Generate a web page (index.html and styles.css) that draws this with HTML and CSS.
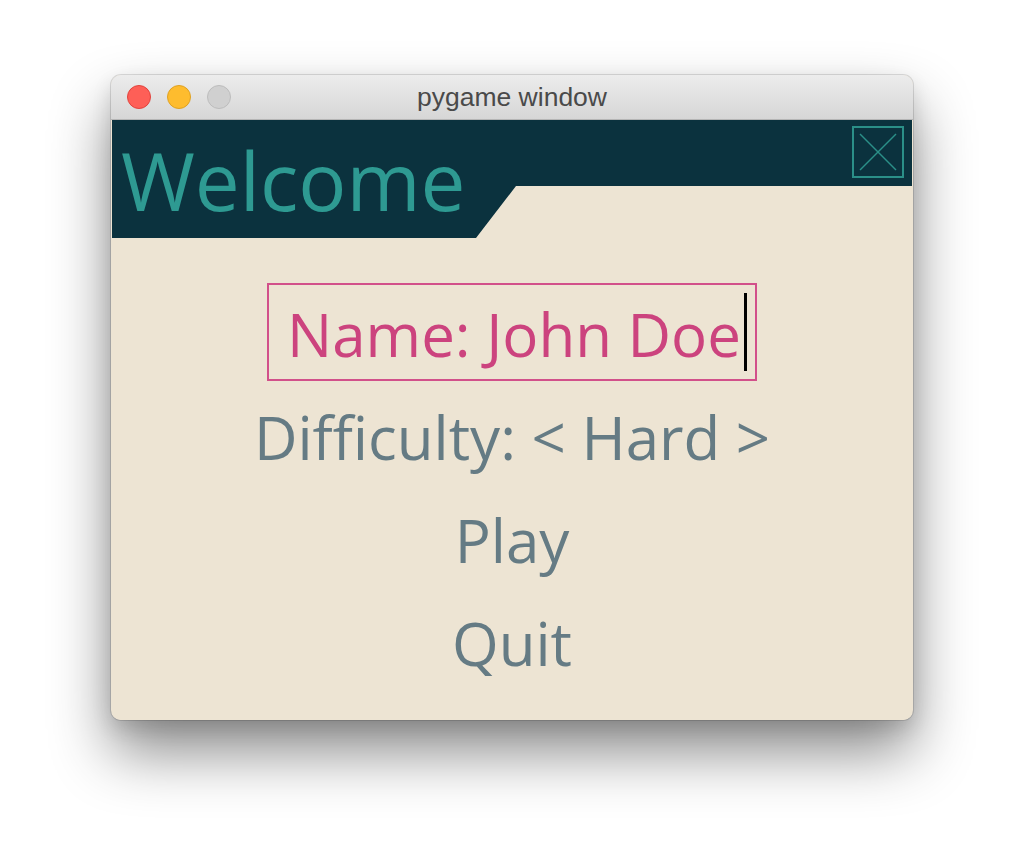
FILE: index.html
```html
<!DOCTYPE html>
<html>
<head>
<meta charset="utf-8">
<link rel="stylesheet" href="styles.css">
</head>
<body>
<div class="window">
  <div class="titlebar">
    <div class="lights">
      <span class="light red"></span>
      <span class="light yellow"></span>
      <span class="light gray"></span>
    </div>
    <div class="wtitle">pygame window</div>
  </div>
  <div class="content">
    <div class="header">
      <div class="htitle">Welcome</div>
      <div class="closebtn">
        <svg width="52" height="52" viewBox="0 0 52 52">
          <rect x="1" y="1" width="50" height="50" fill="none" stroke="#2b8f88" stroke-width="2"/>
          <line x1="8" y1="8" x2="44" y2="44" stroke="#2b8f88" stroke-width="1.4"/>
          <line x1="44" y1="8" x2="8" y2="44" stroke="#2b8f88" stroke-width="1.4"/>
        </svg>
      </div>
    </div>
    <div class="menu">
      <div class="item selected"><span class="txt">Name: John Doe</span><span class="cursor"></span></div>
      <div class="item">Difficulty: &lt; Hard &gt;</div>
      <div class="item">Play</div>
      <div class="item">Quit</div>
    </div>
  </div>
</div>
</body>
</html>
```

FILE: styles.css
```css
html, body {
  margin: 0;
  padding: 0;
  background: #ffffff;
}
body {
  width: 1024px;
  height: 868px;
  overflow: hidden;
  padding-top: 75px;
  padding-left: 111px;
  box-sizing: border-box;
}
.window {
  width: 802px;
  border-radius: 10px;
  overflow: hidden;
  box-shadow: 0 0 0 1px rgba(0,0,0,0.12), 0 32px 60px rgba(0,0,0,0.46), 0 8px 20px rgba(0,0,0,0.12);
  background: #ede4d3;
}
.titlebar {
  height: 44px;
  background: linear-gradient(#ececec, #d6d6d6);
  border-bottom: 1px solid #b5b5b5;
  position: relative;
  display: flex;
  align-items: center;
  justify-content: center;
}
.lights {
  position: absolute;
  left: 16px;
  top: 10px;
  display: flex;
  gap: 16px;
}
.light {
  width: 24px;
  height: 24px;
  border-radius: 50%;
  box-sizing: border-box;
}
.red { background: #fe5f57; border: 1px solid #e0443e; }
.yellow { background: #febc2e; border: 1px solid #dea123; }
.gray { background: #d0d0d0; border: 1px solid #bcbcbc; }
.wtitle {
  font-family: "Liberation Sans", Arial, sans-serif;
  font-size: 26.5px;
  color: #4a4a4a;
  margin-left: 0;
}
.content {
  width: 800px;
  height: 600px;
  margin: 0 1px;
  background: #ede4d3;
}
.header {
  height: 118px;
  background: #0b323e;
  clip-path: polygon(0 0, 100% 0, 100% 66px, 404px 66px, 364px 118px, 0 118px);
  display: flex;
  justify-content: space-between;
  align-items: flex-start;
}
.htitle {
  font-family: "Open Sans", sans-serif;
  font-size: 80px;
  line-height: 114px;
  color: #2e9a92;
  padding-left: 9px;
  margin-top: 3px;
}
.closebtn {
  margin-top: 6px;
  margin-right: 8px;
  width: 52px;
  height: 52px;
}
.closebtn svg { display: block; }
.menu {
  display: flex;
  flex-direction: column;
  align-items: center;
  gap: 5px;
  padding-top: 45px;
}
.item {
  font-family: "Open Sans", sans-serif;
  font-size: 60px;
  line-height: 82px;
  color: #657b84;
  height: 98px;
  box-sizing: border-box;
  padding-top: 10px;
  white-space: nowrap;
}
.item.selected {
  color: #cc437e;
  border: 2px solid #d2508a;
  padding: 8px 8px 0 18px;
  display: flex;
  align-items: flex-start;
}
.cursor {
  display: inline-block;
  width: 3px;
  height: 78px;
  background: #000;
  margin-top: 0;
  margin-left: 3px;
}
```
